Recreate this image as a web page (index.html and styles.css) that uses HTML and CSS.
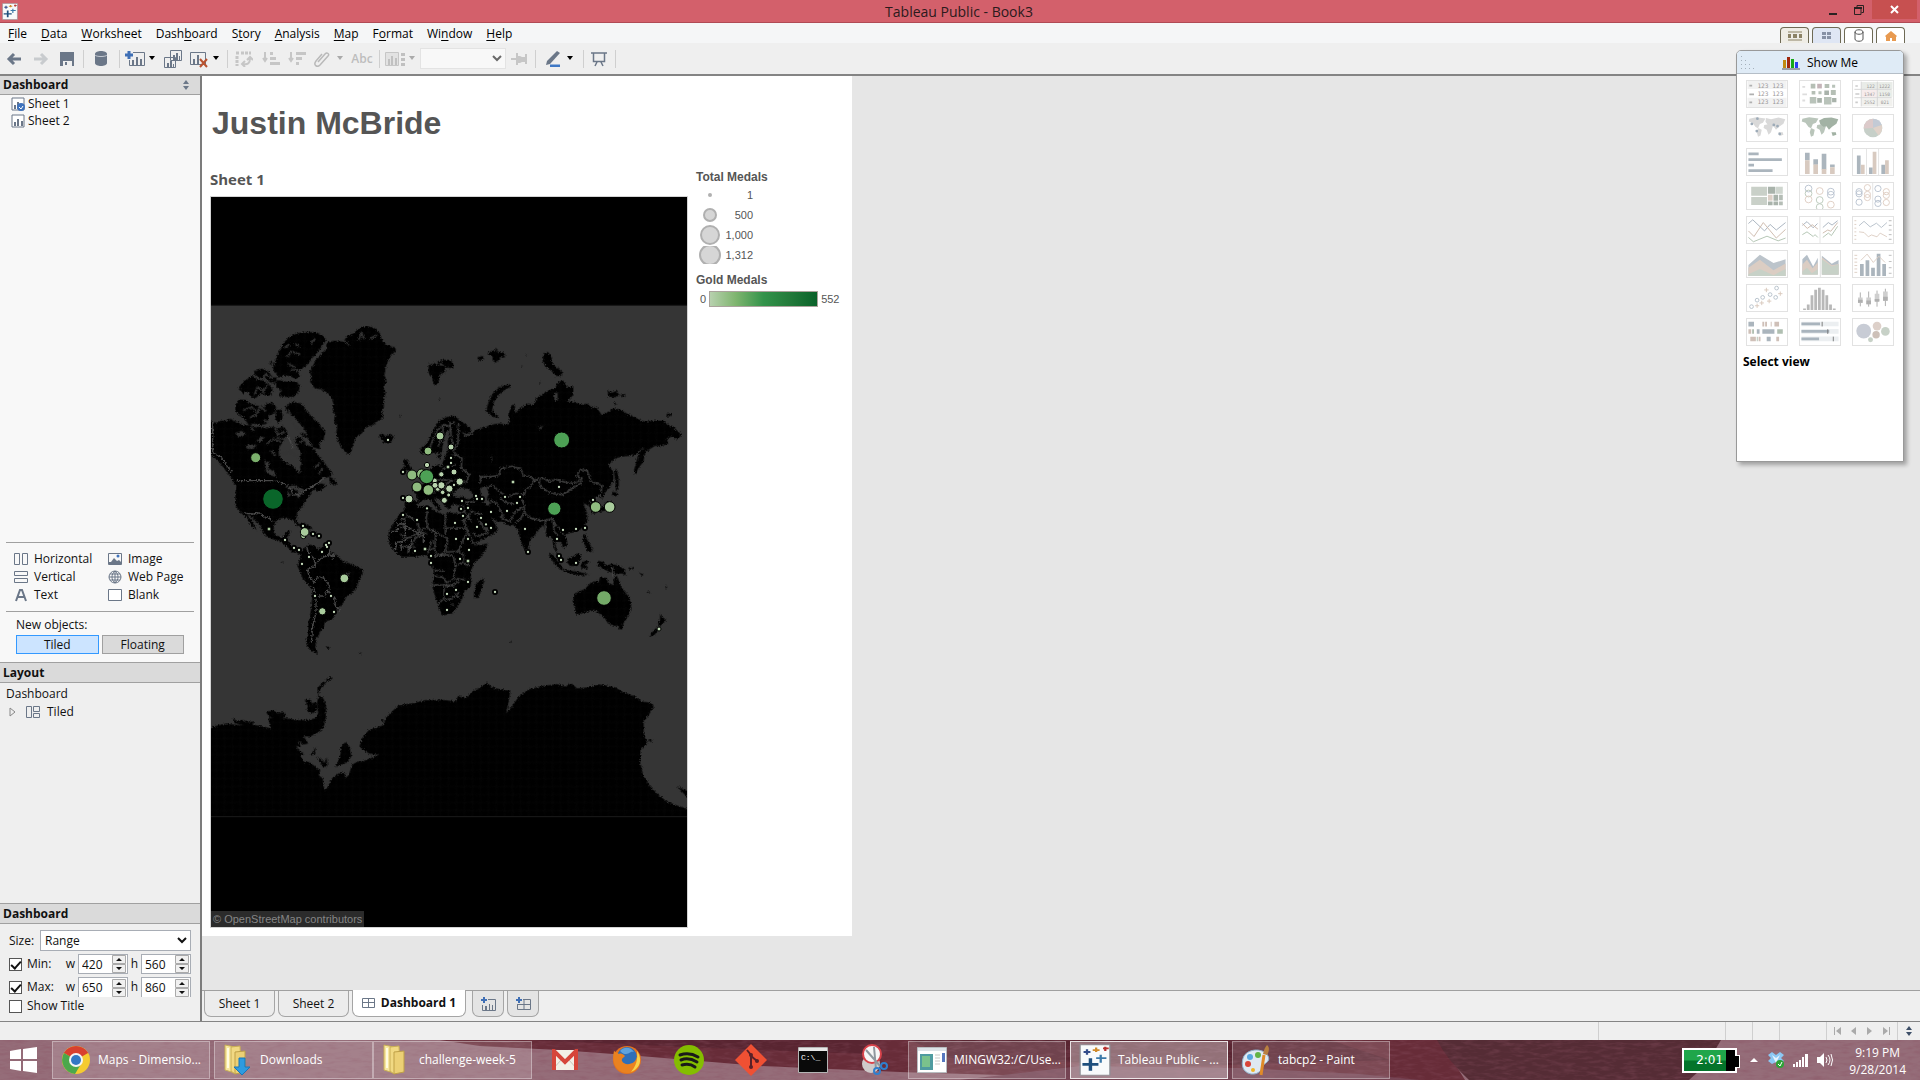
FILE: index.html
```html
<!DOCTYPE html>
<html lang="en">
<head>
<meta charset="utf-8">
<title>Tableau Public - Book3</title>
<link rel="stylesheet" href="styles.css">
</head>
<body>
<svg class="defs" aria-hidden="true">
  <defs>
    <symbol id="caret" viewBox="0 0 8 5"><path d="M1 0h6L4 4z" fill="currentColor"/></symbol>
    <symbol id="bars" viewBox="0 0 14 14"><path d="M1 1h12v12H1z" fill="#fff" stroke="#6b7788"/><path d="M3 8h2v4H3zM6 5h2v7H6zM10 7h2v5h-2z" fill="#6b7788"/></symbol>
    <symbol id="folder" viewBox="0 0 24 32"><path d="M2 1l10 2v26L2 26z" fill="#f7e7a0" stroke="#c9ae55"/><path d="M8 3l9-1 1 20-6 8-4-3z" fill="#f1d983" stroke="#c9ae55"/><path d="M12 8l10-1v21l-10 2z" fill="#ecd075" stroke="#bfa047"/><path d="M5 4v20" stroke="#fffbe0" stroke-width="2"/></symbol>
    <symbol id="plusmark" viewBox="0 0 28 36"><path d="M1 1h26v34H1z" fill="#f8fafb" stroke="#8b9095"/><path d="M10 16v14M3 23h14" stroke="#1f4f7d" stroke-width="3"/><path d="M19 12v9M15 16h9" stroke="#3a78a8" stroke-width="2"/><path d="M7 6v6M4 9h6" stroke="#334c8a" stroke-width="2"/><path d="M15 4v5M12 7h6" stroke="#d08a2a" stroke-width="2"/><path d="M23 3v5M21 5h5" stroke="#b83030" stroke-width="2"/></symbol>
  </defs>
</svg>

<header class="titlebar">
  <svg class="app-icon" viewBox="0 0 28 36" preserveAspectRatio="none"><use href="#plusmark"/></svg>
  <h1>Tableau Public - Book3</h1>
  <div class="window-controls">
    <button aria-label="Minimize"><svg width="12" height="12"><path d="M2 10h8" stroke="#2b2222" stroke-width="2"/></svg></button>
    <button aria-label="Restore"><svg width="12" height="12"><path d="M1.500 4h6.500v6.500H1.500zM4 3.500V1.500h6.500v7H8.500" fill="none" stroke="#2b2222"/><path d="M1 4h8" stroke="#2b2222" stroke-width="2"/></svg></button>
    <button class="close" aria-label="Close"><svg width="12" height="12"><path d="M2 2l7 7M9 2l-7 7" stroke="#fff" stroke-width="2"/></svg></button>
  </div>
</header>

<nav class="menubar">
  <a href="#"><u>F</u>ile</a><a href="#"><u>D</u>ata</a><a href="#"><u>W</u>orksheet</a><a href="#">Dash<u>b</u>oard</a><a href="#">S<u>t</u>ory</a><a href="#"><u>A</u>nalysis</a><a href="#"><u>M</u>ap</a><a href="#">F<u>o</u>rmat</a><a href="#">Wi<u>n</u>dow</a><a href="#"><u>H</u>elp</a>
  <div class="view-tabs">
    <button aria-label="Cards"><svg width="16" height="10"><path d="M1 1h14M1 9h14" stroke="#8b8265"/><path d="M1 3h3v4H1zM6 3h4v4H6zM12 3h3v4h-3z" fill="#8b8265"/></svg></button>
    <button class="on" aria-label="Sheets"><svg width="12" height="10"><path d="M1 1h4v3H1zM6 1h4v3H6zM1 5h4v3H1zM6 5h4v3H6z" fill="#8791a5"/></svg></button>
    <button aria-label="Data"><svg width="12" height="13"><path d="M2 3v7c0 3 8 3 8 0V3M2 3c0-3 8-3 8 0s-8 3-8 0z" fill="#fff" stroke="#555"/></svg></button>
    <button aria-label="Home"><svg width="14" height="12"><path d="M1 6l6-5 6 5-1 1v4H8V8H6v3H2V7z" fill="#e89a50"/></svg></button>
  </div>
</nav>

<div class="toolbar">
  <button class="tool w28" aria-label="Undo"><svg width="16" height="14"><path d="M8 2L3 7l5 5M3 7h12" fill="none" stroke="#6b7788" stroke-width="3"/></svg></button>
  <button class="tool" aria-label="Redo"><svg width="16" height="14"><path d="M8 2l5 5-5 5M13 7H1" fill="none" stroke="#c8cbce" stroke-width="3"/></svg></button>
  <button class="tool" aria-label="Save"><svg width="14" height="14"><path d="M0 0h14v14H0z" fill="#6b7788"/><path d="M3 9h9v5H3z" fill="#efefef"/><path d="M5 10h2v3H5z" fill="#6b7788"/></svg></button>
  <i class="sep"></i>
  <button class="tool w30" aria-label="Connect to data"><svg width="12" height="15"><path d="M0 3c0-4 12-4 12 0v9c0 4-12 4-12 0z" fill="#6b7788"/><path d="M0 4c1 2 11 2 12 0" fill="none" stroke="#c5cad2"/></svg></button>
  <i class="sep"></i>
  <button class="tool-menu" aria-label="New worksheet"><svg width="20" height="16"><path d="M8 1.500h11.500v13H4.500V9" fill="none" stroke="#6b7788"/><path d="M7 9h2v5H7zM11 6h2v8h-2zM15 8h2v6h-2z" fill="#6b7788"/><path d="M4 0v8M0 4h8" stroke="#3f6fb5" stroke-width="3"/></svg><svg class="caret"><use href="#caret"/></svg></button>
  <button class="tool" aria-label="Duplicate"><svg width="18" height="18"><path d="M6.500.5h11v10h-11zM.5 7.500h11v10H.5z" fill="#efefef" stroke="#6b7788"/><path d="M9 5h2v5H9zM12 3h2v7h-2zM15 6h1v4h-1zM3 13h2v4H3zM6 11h2v6H6zM9 14h1v3H9z" fill="#6b7788"/></svg></button>
  <button class="tool-menu" aria-label="Clear"><svg width="20" height="18"><path d="M1.500 2.500h15v12h-15z" fill="none" stroke="#6b7788"/><path d="M4 9h2v5H4zM8 5h2v9H8z" fill="#6b7788"/><path d="M11 9l7 8M18 9l-7 8" stroke="#b9522f" stroke-width="2"/></svg><svg class="caret"><use href="#caret"/></svg></button>
  <i class="sep"></i>
  <button class="tool w28" aria-label="Swap"><svg width="18" height="16" fill="none" stroke="#c6c6c6"><path d="M1 2h3M6 2h10M2 5v10" stroke-width="3" stroke-dasharray="3 1"/><path d="M8 13c5 1 7-1 7-6M12 9l3-3 3 3M10 10l-3 3 3 3" stroke-width="2"/></svg></button>
  <button class="tool" aria-label="Sort ascending"><svg width="18" height="16"><path d="M3 1v9M1 7l2 3 2-3" fill="none" stroke="#c6c6c6" stroke-width="2"/><path d="M8 1h3v3H8zM8 6h6v3H8zM8 11h10v3H8z" fill="#c6c6c6"/></svg></button>
  <button class="tool" aria-label="Sort descending"><svg width="18" height="16"><path d="M3 1v9M1 7l2 3 2-3" fill="none" stroke="#c6c6c6" stroke-width="2"/><path d="M8 1h10v3H8zM8 6h6v3H8zM8 11h3v3H8z" fill="#c6c6c6"/></svg></button>
  <button class="tool-menu off" aria-label="Group"><svg width="18" height="16"><path d="M5 11l7-8c2-2 5 0 3 2l-8 9c-3 3-7 0-4-4l6-7" fill="none" stroke="#b9b9b9" stroke-width="1.500"/></svg><svg class="caret"><use href="#caret"/></svg></button>
  <button class="tool w28 abc">Abc</button>
  <i class="sep"></i>
  <button class="tool-menu off" aria-label="Fit"><svg width="20" height="14"><path d="M.5.500h13v13H.5z" fill="#e2e2e2" stroke="#c6c6c6"/><path d="M3 7h2v6H3zM6 4h2v9H6zM10 6h2v7h-2zM16 1h4v3h-4zM16 6h4v3h-4zM16 11h4v3h-4z" fill="#c0c0c0"/></svg><svg class="caret"><use href="#caret"/></svg></button>
  <select class="fit" aria-label="Fit" disabled><option></option></select>
  <button class="tool" aria-label="Pin"><svg width="16" height="12"><path d="M0 6h6M6 0v12M15 1v10" stroke="#c6c6c6" stroke-width="2"/><path d="M6 3h3l2 1h4v5h-4L9 10H6z" fill="#c6c6c6"/></svg></button>
  <i class="sep"></i>
  <button class="tool-menu w42" aria-label="Highlight"><svg width="18" height="16"><path d="M2 14l1-4L13 0l3 2L6 13z" fill="#6b7788"/><path d="M6 15h10" stroke="#3f78c5" stroke-width="3"/></svg><svg class="caret"><use href="#caret"/></svg></button>
  <i class="sep"></i>
  <button class="tool" aria-label="Presentation mode"><svg width="16" height="16"><path d="M0 2h16M2.500 2v8.500h11V2M6 11l-2 4M10 11l2 4" fill="none" stroke="#6b7788" stroke-width="1.500"/></svg></button>
  <i class="sep"></i>
</div>

<main class="main">
  <aside class="sidebar">
    <h2 class="panel-head first">Dashboard <svg width="8" height="10"><path d="M1 4l3-4 3 4zM1 6l3 4 3-4z" fill="#6b7788"/></svg></h2>
    <ul class="sheets">
      <li><svg width="14" height="14"><use href="#bars"/><circle cx="10" cy="10" r="4" fill="#3f73bd"/><path d="M8 10l2 2 2-3" fill="none" stroke="#fff"/></svg>Sheet 1</li>
      <li><svg width="14" height="14"><use href="#bars"/></svg>Sheet 2</li>
    </ul>
    <div class="objects">
      <ul>
        <li><svg width="14" height="14"><path d="M.5 1.500h5v11h-5zM8.500 1.500h5v11h-5z" fill="none" stroke="#6b7788"/></svg>Horizontal</li>
        <li><svg width="14" height="14"><path d="M.5 1.500h13v11H.5z" fill="none" stroke="#6b7788"/><path d="M3 10l3-4 3 3 2-1 2 2v2H1v-2z" fill="#6b7788"/><circle cx="10" cy="4" r="1.500" fill="#3f73bd"/></svg>Image</li>
        <li><svg width="14" height="14"><path d="M.5 1.500h13v4H.5zM.5 8.500h13v4H.5z" fill="none" stroke="#6b7788"/></svg>Vertical</li>
        <li><svg width="14" height="14"><path d="M7 1a6 6 0 100 12A6 6 0 007 1zM7 1v12M1 7h12M2 4h10M2 10h10M7 1C3 4 3 10 7 13M7 1c4 3 4 9 0 12" fill="none" stroke="#6b7788"/></svg>Web Page</li>
        <li><svg width="14" height="14"><path d="M2 13L6 2h2l4 11M4 9h6" fill="none" stroke="#6b7788" stroke-width="2"/></svg>Text</li>
        <li><svg width="14" height="14"><path d="M.5 1.500h13v11H.5z" fill="#fff" stroke="#6b7788"/></svg>Blank</li>
      </ul>
    </div>
    <div class="new-objects">
      <span>New objects:</span>
      <div><button class="on">Tiled</button><button>Floating</button></div>
    </div>
    <h2 class="panel-head">Layout</h2>
    <div class="layout-tree">
      <div>Dashboard</div>
      <div class="node"><svg width="8" height="10"><path d="M1 1l5 4-5 4z" fill="none" stroke="#888"/></svg><svg width="14" height="13"><path d="M.5.500h5v11h-5zM7.500.500h6v5h-6zM7.500 7.500h6v4h-6z" fill="none" stroke="#6b7788"/></svg>Tiled</div>
    </div>
    <h2 class="panel-head">Dashboard</h2>
    <form class="size">
      <div class="row size-row"><label for="size">Size:</label><select id="size"><option>Range</option></select></div>
      <div class="row dims">
        <label><input type="checkbox" checked>Min:</label>
        <label for="minw">w</label><span class="spin"><input id="minw" value="420"><svg width="14" height="18"><use href="#steps"/></svg></span>
        <label for="minh">h</label><span class="spin"><input id="minh" value="560"><svg width="14" height="18"><use href="#steps"/></svg></span>
      </div>
      <div class="row dims">
        <label><input type="checkbox" checked>Max:</label>
        <label for="maxw">w</label><span class="spin cut"><input id="maxw" value="650"><svg width="14" height="18"><use href="#steps"/></svg></span>
        <label for="maxh">h</label><span class="spin cut"><input id="maxh" value="860"><svg width="14" height="18"><use href="#steps"/></svg></span>
      </div>
      <label class="row"><input type="checkbox">Show Title</label>
    </form>
    <svg class="defs"><symbol id="steps" viewBox="0 0 14 18"><path d="M.5.500h13v8H.5zM.5 9.500h13v8H.5z" fill="#f0f0f0" stroke="#aaa"/><path d="M4 6h6L7 3zM4 12h6l-3 3z" fill="#111"/></symbol></svg>
  </aside>

  <section class="workspace">
    <div class="canvas">
      <article class="page">
        <h2 class="page-title">Justin McBride</h2>
        <div class="page-body">
          <section class="sheet">
            <h3>Sheet 1</h3>
            <div class="map">
              <svg viewBox="0 0 1428 2190" preserveAspectRatio="xMidYMid slice" role="img" aria-label="World map of medals">
                <defs>
                  <filter id="coast" x="-5%" y="-5%" width="110%" height="110%" color-interpolation-filters="sRGB"><feTurbulence type="fractalNoise" baseFrequency="0.200" numOctaves="2" seed="4"/><feDisplacementMap in="SourceGraphic" scale="12" xChannelSelector="R" yChannelSelector="G"/></filter>
                  <pattern id="tile" width="24" height="24" patternUnits="userSpaceOnUse"><path d="M0 0h24v24H0z" fill="#000"/><path d="M0 1h24M1 0v24" stroke="#090909" stroke-width="2"/></pattern>
                </defs>
                <path d="M0 0h1428v2190H0z" fill="#000"/>
                <path d="M0 326h1428v1533H0z" fill="#353535"/>
                <g filter="url(#coast)" fill="url(#tile)">
                  <g transform="translate(-33 309)">
                    <path d="M20 362l30 6 12-6 14 1 16-7 8 6 12 4 18 10 20-1 15 7 15-2 20 5 15-5 20 5 15-7 8 12 4 10-7 15-10 15-9 15v20l9 15 17 10 18 10 10 10 7 12 5-7-2-15 5-10-5-15 3-15-8-15-5-10 15-5 15 5 15 5 10 10 7 15 13 13 10 12 10 15 13 15-8 10-20 5-15 10-10 10 10-3 10-2 15 6-15 14-15 5-5-10-10 10-10 15-10 15-5 10-12 15-8 15v15l7 16-7 2-10-18-15-4-15-2-12 2-13 10-3 15-2 13 8 12 12 5 12-5 8-12 10-3-2 13-10 10 7 10 10 12 3 10 12 8 15 0 5 4-8 6-12-6-12 0-13-14-15-13-15-10-15-3-15-7-15-10-5-15-10-15-15-15-10-10-8-2 16 22 12 24-10-5-12-16-9-18-10-7-15-15-7-15-1-20 1-20 2-17-8-8-7-15-15-20-15-20-15-17-30-20z"/>
                    <path d="M440 460l-15-15-10-20-7-25 4-20-10-18 3-17-7-15 2-20-5-15-10-15-20-12-20-3-15-20 5-15-7-15 12-20 10-20 15-15 15-15-2-15 22-8 30 3 10-15 20-10 20-18 20-5 25 8 15 15 5 18 15 17 25 7 3 10-13 13-10 15-7 20-5 25 7 20-10 15 7 20-7 20 2 20-7 15 5 15-15 12-15 13-20 5-15 20-15 10-10 20-5 20-5 12z"/>
                    <path d="M315 200l-15 10-20-5-18 10-17-10-17-15 0-20 12-20 10-20 15-18 25-12 30-4 30 1 20 11 8 12-13 20-15 20-15 15-10 15z"/>
                    <path d="M225 185l22 14 26 12 20 2 6 14-10 10-18-8-20-4-14 8-12-12-6-16zM230 240l30 5 30 0 10 14-6 20-14 12-28 0-18-4 10-16-16-10zM162 214l24-8 20 8 8 14 16 6-4 18-18-6-10-12-20-2-14-8zM116 262l20-22 22-12 14 10 20 4 12 12 8 18-14 10-18 0-12 12-16-4-8-14-16 4zM188 260l16-10 16 20-6 18-20-2zM106 320l10-22 20 2 14 10 16 6 24 4 16 15-1 20-5 16-20 4-20-4-14 4-16-24-15-6-9-14zM194 316l20-10 14 14-4 20-18 6-10-12zM228 330l16 0 4 24-14 16-8-16zM258 316l22-10 22 4 20 26 20 20 20 20 14 20-6 24-14 10 5 18-20-6-20-26-22-16 20-4-20-26-16-20-18-8-8-14zM290 410l20 6 8 16-20 6-14-14zM210 184l6 2v8l-6-2zM352 500l14 5 2 10-12 0zM388 530l12 6 12 16-10 4-14-10zM535 408l10-6 14 6 14-6 8 8-4 12-14 8-16-4 0-8zM686 190l8 6 8-8 10 8 10-8 14 12 8 4 16 0 0-16-12-8-22 0-14 8 8 8 16 2-2 20-14 4-4 24-10 12-6-8-4-20-10-12zM605 505l12-4 2 16-14 6zM612 476l10 4 6 16 10 20-2 14-14 4 6-16-12-16-6-14z"/>
                    <path d="M292 672l18-2 16 8 12 8-14 2-16-6-12-4zM330 696l16 0 8 8-12 4-14-4zM368 756l-6-10 24 0-4 14zM245 784l6 2-4 3zM380 1040l9 1-2 6-8-2zM476 1056l8 5-4 2zM598 344l5 2-3 4zM716 295l5 2-3 4z"/>
                    <path d="M308 750l10-12 12-5 15 7 10 8 15-8 15 10 15 10 15 10 15 15 25 7 15 8 18 8v14l-13 23-7 20-13 15-15 8-8 17-12 15-12 15-13 5 10 10-13 10-17 5-5 20-10 10-5 15-10 5 5 15-5 10 10 22-17-7-13-10-7-20 7-25v-30l7-35 4-35 2-30-13-15-17-20-10-25-6-12 8-23z"/>
                  </g>
                  <g transform="translate(567 369)">
                    <path d="M62 400l0-15 16-13 12-17 10-25 15-25 15-10 20-7 20 2 5 10 20 12 17 13-2 15-15 0-10-5 10 15 20-5 10-15 20-5 20-7 20-6 15-2 20 5 10-10-5-20 10-30 10 0 0 25 15-15 25-15 15 5 10-20 20-15 15-8 20-7 10-20 15-3 10 18 20 0 0 25-20 20 20 0 25 10 15-5 15 12 15 0 15 23 20-10 15-10 20 3 20 12 25 12 15 8 15 5 25-3 30 0 20 16 15 7 20 20-13 13-17-8-15 5 5 17-20 6-20 0-20 12-10 10-5 25-15 20-10 20-3-15 6-20 7-30 20-20-15 10-15 15-15 3-25 2-20 5-20 20 15 20 0 25-10 20-15 15-7 20-18-5-15 5-10 10 16 10 8 24-10 2-14-26-15-5 10 25 3 25-8 15-15 15-20 7-15 3-10 5 5 15 3 13-13 12-5-15-12-10-8 5 5 30 10 15 10 10-10-3-13-22-7-20-5-25-15 0-5-20-5-15-15 15-10 15-15 15-5 25-10 8-10-23-8-25-2-15-15-15-20 0-15-10-15 0-18-16 23 41-20 15-30 15-18 6 5 10 30-6-5 20-15 20-20 20-10 25 0 30 0 15-20 15-5 20-15 25-15 20-30 7-10-22-10-30-10-35 5-35-5-25-10-25-10-10-30 5-25 0-20 0-12-10-14-15-10-20 0-30 18-30 14-22 14-10 20-10 30-4 28 2 14 12 24 10 20-6 30 4 18-2-4-22-14 0-18-6-8 12-6 6-10-10-8-14-20-12-6 4 16 20 6 14-8 2-12-16-16-20-22 4-14 10 0 16-10 12-22 0-6-6 0-26 16-8 22 6-2-20-14-14 18-8 24-14 12-14 0-24 8-14 14 0 6-14-6-14 10-10-12 0z"/>
                    <path d="M430 100l14-4 12 16-2 14 12 14 20 14 0 14-20 0-12-16-16-12-10-16zM328 192l4 8-22 12-16 14-12 20-6 26 22 22-16-2-24-18 8-30 14-26 18-16zM232 112l16-4 4 8-16 6zM262 100l14-8 8 4 4-14 6 14 18 2 4 10-14 4-14 16-10-6 0-12zM622 212l14 6 14-6 8 14-14 6-18-2zM660 224l18 2-6 8zM640 246l10 4-6 6zM800 282l14-2-2 8-12 2zM376 102l4 1-2 4zM364 136l4 2-3 3zM418 186l4 2-3 4z"/>
                    <path d="M650 445l6 30 0 30-8 10-2-30-4-30zM636 515l18 4-4 10-14-2zM620 545l14 0-4 14-14 12-24 6-4-8 20-8zM552 620l6-4-2 18-6-4zM550 645l8-4 2 16 12 20 6 14-8 6-10-4-2-12-10-16zM445 698l12 4 12 16 14 18 6 12-10 0-16-18-12-16zM488 748l22 4 26 4 20 4 14 4-30 2-30-6-20-6zM502 716l12-4 20-12 10 8-8 20-6 10-20 0-8-10zM548 724l20-2-2 8-10 2 8 12-6 4-8-8-4 12-4-14zM594 722l16 4 8 12 16-6 24 6 16 12 6 18-14-8-20 2-20-8-18-8-14-8zM686 742l14 0-2 6-12 0zM716 756l14 8-4 4zM742 812l8 6-4 4zM796 798l6 2-4 6z"/>
                    <path d="M524 820l14-6 18-8 14-16 16-6 10 0 4-12 20 2 4 14 14 8 6-24 6-6 8 22 10 20 18 22 8 22-4 22-12 24-12 18-22 2-20-8-10-16-12-10-16-12-20 2-26 8-12 2-4-20-6-20zM654 912l16 0-4 16-8 0zM780 882l8 10 10 6-8 12-12 10-4-8 6-12zM770 922l6 6-12 16-14 6 2-8z"/>
                    <path d="M248 776l4 10-8 22-8 26-14 0 0-20 6-22zM330 964l6 2-4 3z"/>
                  </g>
                  <g transform="translate(-33 1359)">
                    <path d="M20 245l20-15 40-10 30 5 40-3 40 8 22 5-7-30 25-5 30 5 30 5 30 0 25-5 10-15-5-25 5-25-3-25 13-15 25-18 10 3-20 10-18 20-7 20 15 10 8 20 0 35-8 35-20 15-20 10-20-2 15 22-14 4-16-12 8 18-14-2 6 12 16 10-10 8 13 20 12-3 20 15 15 10-5 15 12 10 3 25 5 12 10-17 10-20 20-15 18-2 2 17 10-10 10-30 15-10 15 0 50-20-30-5-28-20 8-25 20-25 45-15 5-20 20-20 20-20 40-5 40-10 60 0 30 5 10-20 20 10 20-20 30-15 15-12 15 14 25 6 30 4-5 33-8 35 18-20 20-30 30-22 40-10 45-6 25 8 18-10 17 15 35-3 30-9 50 9 20 13 40 15 20 15 25 3 10 12-15 25-15 20 0 35 10 30-20 20 0 40 10 40 20 30 25 25 25 20 35 13 60 20v60H-20V245z"/>
                    <path d="M422 290l14-13 12 12 6 30-12 18-36 14 10-20 6-22zM332 312l18-22-10 26zM350 318l24 20 6-16 2 28-14 0zM98 202l10 10 20-2 20 6 16-2-10 12-30-2-20-4zM198 186l22-6 12 10 20-4 6 14-30 6-20-6zM314 152l16-6 6 14 12-4 2 26-16 8-14-8 4-14zM1430 408l51 24v30zM1344 268l14 2-6 6zM545 208l6 0-2 10z"/>
                  </g>
                  <g fill="#353535">
                    <path d="M72 708l20-6 14 8-14 10-14-4zM104 744l34-2-10 14-20 0zM136 732l14-14 10 4-12 14zM160 790l16 6-6 18 14 12-4 10-14-10zM174 816l16 8 6 16-14-4zM221 869l28-4 26 10 6 14-14 2-12-12-18-2zM230 878l10 16-10 8zM252 886l18 10-8 8zM390 1133l30-6-14 14z"/>
                    <path d="M678 800l10-18 8-42 6-32 16-14-8 40 2 22-12 28-10 28zM715 776l24-8-8 10zM734 880l14-10 10 4 14 2 18 22-16 10-22-8-22 2-6-12zM806 874l18-8 10 22-6 16 14 18-14 4-14-18zM1030 612h10l0-24-10 0zM980 692l18-6-12 12zM844 774v20l-4-4zM758 954l8 30 16 40 12 20-10-2-16-34-16-44zM798 960l22 22 22 18-20 2-14-18z"/>
                  </g>
                  <g class="channels">
                    <path d="M96 640l26-10 14 12M116 662l20-8 10-24 20 12M130 594l10-24 18 14 12-22M150 550l14-18 20 12 12-16M176 600l12-22 24 4M158 668l16 10 14-20M192 690l8 24 20-10M168 740l18-14 24 8M180 760l14 16M232 640l10 24 14 6M246 680l12 16 20-6M270 700l16 14M214 772l24-6 18 12M266 736l24-14M228 480l14-16 26 8M220 452l16-10M250 440l16 8M300 440l12-16M230 500l22 10M398 430l16 14M442 430l10-22 8 18M478 424l20-10M120 690l10 14M196 722l30 6M150 610l20 8M310 812l16-12M322 830l14-16"/>
                  </g>
                </g>
                <path d="M0 1859h1428v331H0z" fill="#000"/>
                <path d="M0 325h1428M0 1859h1428" stroke="#1b1b1b" stroke-width="3"/>
                <g class="borders" filter="url(#coast)">
                  <g transform="translate(-33 309)">
                    <path d="M108 542h120l28 12 16 12 6 20 20-4 20-12 16-8 20-14 20-16M136 640l26 2 18-4 14 16 10-4 14 16M240 710l16 4 4 12M38 362v96l26 14 16 24 16 20M262 405l18 40M320 740l6 20 16 16 4 22-24 10 6 24 16 12M342 798l18-20 26-14 20 6M340 850l14-20 18 4 16 24-4 20 20 14 2 26 14 14M340 860l8 28 0 50-10 40-4 50M348 888l24 0 12-18 14 22M388 750l2 20M400 760l0 16"/>
                    <path d="M568 694h24v-22h24v50l-30 6M600 668l56 32 14-2 0 30M616 640l-14 22M590 730l-4 20M604 728v24M636 720l-10 36"/>
                  </g>
                  <g transform="translate(567 369)">
                    <path d="M88 390l10-30 14-30 20-16 16 4 16-14M130 316l-2 30-14 34M150 305l4 50 6 20M176 310l-2 60-16 24M160 400l26 14-2 30 24 20-10 24-26-10-30 10-14 26-30-10-20 4M124 450l20-12 24-4M110 480l44 0M88 480l14 40M128 500l30 14M240 490l2-20 30 0 24-4 6-20 34-8 28 10 6 20 20 0 16 16M402 480l-10 20-14 6-6 20-24-6-24 10-26-14-20-22-18 10M402 480l24-6 24 10 16-6 34 10 20 2 20-8M416 484l10 20 26 16 36 4 24-16 30-18 4-16-18-4 14-22 20 4 10 32 34 12-4 30-16 10M360 528l10 20 6 34 20 14 36 6 24-6 14 22M300 532l18 16 30 4M270 540l20 10 20 40M300 590l30 16 14-30 24-14M348 608l14-12 10-20M436 600l0 36M460 600l2 34 14 14M476 620l14 24M200 550l14 24 30 10M190 570l24 34M192 600l20-20M230 650l-12-12M230 650l36-14M180 546l50 0 0-20M222 530l30 14"/>
                    <path d="M14 582l0 40-14 0M14 580l40 26 4 30-34 20-24-14M54 640l20-16M84 566l-6 30 6 30 24 8M84 626l60 30M136 580v64M136 624h60M108 634l-4 50-22 10M144 656l-8 40-24 12-6-20M136 696l40-2 14 10 0 18M176 694l12-34 12-20M80 640l-34 14-12 26-34 0M24 700l2-24M40 700l2-22M84 700l12-40M100 710l36-6 24 4 6 30-6 40-20 10-12-16-28-4M96 750l36 4M164 740l24-14 20 12M166 776l36 4M90 795h64l22-10M132 800v34l-18 20M136 800l20-4 20 24-24 16-20 4M164 820l14 12M156 850l4 10M638 740v30"/>
                  </g>
                </g>
                <g class="dots">
                  <g transform="translate(567 369)">
                    <path class="dot" d="M9 456h0M9 534h0M9 585h0M51 600h0M81 565h0M45 693h0M93 708h0M93 729h0M153 414h0M153 429h0M165 609h0M168 657h0M204 657h0M207 690h0M180 717h0M204 786h0M168 810h0M141 822h0M141 870h0M285 816h0M183 567h0M204 564h0M189 588h0M186 543h0M228 528h0M231 537h0M246 537h0M243 594h0M273 576h0M231 621h0M258 613h0M273 624h0M315 531h0M321 573h0M351 549h0M360 531h0M375 627h0M384 696h0M477 501h0M489 630h0M471 657h0M528 627h0M555 624h0M477 708h0M483 720h0M528 729h0M579 540h0M162 495h0"/>
                    <path class="core" d="M9 456h0M9 534h0M9 585h0M51 600h0M81 565h0M45 693h0M93 708h0M93 729h0M153 414h0M153 429h0M165 609h0M168 657h0M204 657h0M207 690h0M180 717h0M204 786h0M168 810h0M141 822h0M141 870h0M285 816h0M183 567h0M204 564h0M189 588h0M186 543h0M228 528h0M231 537h0M246 537h0M243 594h0M273 576h0M231 621h0M258 613h0M273 624h0M315 531h0M321 573h0M351 549h0M360 531h0M375 627h0M384 696h0M477 501h0M489 630h0M471 657h0M528 627h0M555 624h0M477 708h0M483 720h0M528 729h0M579 540h0M162 495h0"/>
                    <g fill="#b9d4ae"><circle cx="75" cy="687" r="6"/><circle cx="204" cy="723" r="6"/><circle cx="339" cy="486" r="6"/><circle cx="777" cy="927" r="6"/><circle cx="144" cy="441" r="6"/><circle cx="153" cy="381" r="9"/><circle cx="81" cy="435" r="8"/><circle cx="124" cy="463" r="8"/><circle cx="162" cy="456" r="9"/><circle cx="179" cy="485" r="11"/><circle cx="146" cy="525" r="6"/><circle cx="128" cy="517" r="7"/><circle cx="133" cy="541" r="9"/><circle cx="148" cy="506" r="11"/><circle cx="113" cy="506" r="8"/><circle cx="124" cy="496" r="11"/><circle cx="104" cy="482" r="8"/><circle cx="105" cy="496" r="9"/><circle cx="27" cy="537" r="12"/></g>
                    <g fill="#a9cc9c"><circle cx="120" cy="348" r="12"/><circle cx="629" cy="561" r="16"/></g>
                    <g fill="#8fbc7f"><circle cx="84" cy="393" r="12"/><circle cx="36" cy="465" r="15"/><circle cx="65" cy="462" r="15"/><circle cx="51" cy="501" r="15"/><circle cx="85" cy="510" r="16"/><circle cx="587" cy="561" r="16"/></g>
                    <g fill="#4da155"><circle cx="80" cy="470" r="21"/><circle cx="485" cy="360" r="24"/><circle cx="463" cy="566" r="20"/></g>
                    <circle cx="612" cy="834" r="22" fill="#74aa68"/>
                  </g>
                  <g transform="translate(-33 309)">
                    <path class="dot" d="M255 720h0M282 744h0M297 750h0M309 678h0M339 702h0M357 708h0M378 735h0M387 729h0M381 741h0M366 756h0M327 771h0M306 792h0M345 888h0M393 888h0M402 936h0M564 420h0"/>
                    <path class="core" d="M255 720h0M282 744h0M297 750h0M309 678h0M339 702h0M357 708h0M378 735h0M387 729h0M381 741h0M366 756h0M327 771h0M306 792h0M345 888h0M393 888h0M402 936h0M564 420h0"/>
                    <g fill="#a9cc9c"><circle cx="310" cy="708" r="8"/><circle cx="314" cy="696" r="13"/><circle cx="207" cy="687" r="6"/><circle cx="433" cy="835" r="13"/><circle cx="367" cy="934" r="11"/></g>
                    <circle cx="167" cy="473" r="15" fill="#7bb06c"/><circle cx="219" cy="597" r="31" fill="#0a662a"/>
                  </g>
                </g>
              </svg>
              <span class="credit">© OpenStreetMap contributors</span>
            </div>
          </section>
          <aside class="legends">
            <h4>Total Medals</h4>
            <ul class="sizes">
              <li><svg width="24" height="20"><circle class="speck" cx="12" cy="10" r="2"/></svg><span>1</span></li>
              <li><svg width="24" height="20"><circle cx="12" cy="10" r="6"/></svg><span>500</span></li>
              <li><svg width="24" height="20"><circle cx="12" cy="10" r="9"/></svg><span>1,000</span></li>
              <li><svg width="24" height="18"><circle cx="12" cy="9" r="10"/></svg><span>1,312</span></li>
            </ul>
            <h4>Gold Medals</h4>
            <div class="ramp"><span>0</span><i></i><span>552</span></div>
          </aside>
        </div>
      </article>
    </div>
    <nav class="sheet-tabs">
      <button>Sheet 1</button>
      <button>Sheet 2</button>
      <button class="on"><svg width="13" height="10"><path d="M.5.500h12v9H.5zM.5 4.500h12M6.500.500v9" fill="none" stroke="#6b7788"/></svg>Dashboard 1</button>
      <button class="add" aria-label="New worksheet"><svg width="15" height="14"><path d="M7 2.500h7.500v11H1.500V8" fill="none" stroke="#6b7788"/><path d="M4 9h2v4H4zM8 7h1v6H8zM11 8h1v5h-1z" fill="#6b7788"/><path d="M3 0v6M0 3h6" stroke="#3f6fb5" stroke-width="2"/></svg></button>
      <button class="add" aria-label="New dashboard"><svg width="15" height="14"><path d="M7 2.500h7.500v10H1.500V7M1 7.500h13M8 3v9" fill="none" stroke="#6b7788"/><path d="M3 0v6M0 3h6" stroke="#3f6fb5" stroke-width="2"/></svg></button>
    </nav>
  </section>
</main>

<footer class="statusbar">
  <i class="c127"></i><i class="c27"></i><i class="c27"></i><i class="c47"></i>
  <div class="pager"><svg width="58" height="10" fill="#aaa"><path d="M1 1h1v8H1zM8 1v8L3 5zM23 1v8l-5-4zM34 1v8l5-4zM50 1v8l5-4zM56 1h1v8h-1z"/></svg></div>
  <div class="more"><svg width="8" height="10"><path d="M1 4l3-4 3 4zM1 6l3 4 3-4z" fill="#3d4f68"/></svg></div>
</footer>

<footer class="taskbar">
  <svg class="wallpaper" viewBox="0 0 1920 40" preserveAspectRatio="none" aria-hidden="true">
    <defs><filter id="grain" x="0" y="0" width="100%" height="100%"><feTurbulence type="fractalNoise" baseFrequency="0.080 0.300" numOctaves="3" seed="8"/><feColorMatrix values="0 0 0 0 0.250 0 0 0 0 0.080 0 0 0 0 0.120 1.800 0 0 0 -0.750"/></filter></defs>
    <path d="M0 0h1920v40H0z" fill="#956d79"/>
    <path d="M440 0h1000l25 40H1350L1100 38 900 32 760 26 640 16 560 10 480 6z" fill="#672c38"/>
    <path d="M530 0h340v14l-160-6zM910 0h420l60 20-200 6-240-8z" fill="#592531"/>
    <path d="M1080 26l160 2 120 6 60 6H960z" fill="#744453"/>
    <path d="M1437 0h284q-14 26-32 40h-220q-22-20-32-40z" fill="#552c35"/>
    <path d="M0 0h1437l25 40H0zM1721 0h199v40h-231z" filter="url(#grain)" opacity=".45"/>
  </svg>
  <button class="start" aria-label="Start"><svg width="28" height="26"><path d="M0 4l11-2v10H0zM13 2l14-2v12H13zM0 14h11v10L0 22zM13 14h14v12l-14-2z" fill="#fff"/></svg></button>
  <button class="task"><svg width="30" height="30" viewBox="0 0 30 30"><circle cx="15" cy="15" r="14" fill="#f5cb30"/><path d="M15 15L3 8a14 14 0 0124 0z" fill="#d8402f"/><path d="M15 15L3 8a14 14 0 0011 21l6-10z" fill="#4ba84c"/><path d="M3 8A14 14 0 0127 8H15z" fill="#d8402f"/><circle cx="15" cy="15" r="7" fill="#f4f4f4"/><circle cx="15" cy="15" r="5" fill="#3277c4"/></svg><span>Maps - Dimensio...</span></button>
  <button class="task joined"><svg width="30" height="32" viewBox="0 0 30 32"><use href="#folder" width="24" height="32"/><path d="M16 14h6v9h5l-8 8-8-8h5z" fill="#2e9be0" stroke="#1976b8"/></svg><span>Downloads</span></button>
  <button class="task joined"><svg width="30" height="32" viewBox="0 0 30 32"><use href="#folder" width="24" height="32"/></svg><span>challenge-week-5</span></button>
  <div class="pins">
  <button class="pin" aria-label="Gmail"><svg width="28" height="22"><path d="M1 1h26v20H1z" fill="#f2efe6"/><path d="M1 21L11 10M27 21L17 10" stroke="#c8c4b8"/><path d="M3 21V2l11 11L25 2v19" fill="none" stroke="#d6453a" stroke-width="4"/></svg></button>
  <button class="pin" aria-label="Firefox"><svg width="30" height="30"><circle cx="15" cy="15" r="14" fill="#e3731e"/><circle cx="15" cy="12" r="10" fill="#2f6fb8"/><path d="M8 6c4-5 11-4 14 1-4-1-4 2-8 2s-4-2-6-3z" fill="#5fa3dd"/><path d="M2 6l5 3c2-1 4 0 6 2-1 2-4 2-3 5 2 4 8 4 12 1 2-2 4-6 3-11 6 9 3 20-8 22C5 29-1 18 2 6z" fill="#ea8220"/><path d="M25 6c6 8 3 18-6 21 5-6 7-12 6-21z" fill="#f8d14a"/></svg></button>
  <button class="pin" aria-label="Spotify"><svg width="30" height="30"><circle cx="15" cy="15" r="15" fill="#84bd00"/><path d="M6 10c6-2 13-1 18 2M7 15c5-2 11-1 16 2M8 20c4-1 9-1 13 2" fill="none" stroke="#1a1a1a" stroke-width="3" stroke-linecap="round"/></svg></button>
  <button class="pin" aria-label="Git"><svg width="32" height="32"><path d="M16 0l16 16-16 16L0 16z" fill="#f05033"/><path d="M12 6l4 5v13M16 12l6 5" fill="none" stroke="#5a2128" stroke-width="2"/><circle cx="16" cy="11" r="2" fill="#5a2128"/><circle cx="16" cy="23" r="2" fill="#5a2128"/><circle cx="22" cy="17" r="2" fill="#5a2128"/></svg></button>
  <button class="pin" aria-label="Command Prompt"><svg width="30" height="26"><path d="M.5.500h29v25H.5z" fill="#0a0a0a" stroke="#b5b5b5"/><path d="M1 1h28v3H1z" fill="#e8e8e8"/><text x="3" y="13" class="prompt">C:\_</text></svg></button>
  <button class="pin" aria-label="Snipping Tool"><svg width="30" height="32"><circle cx="11" cy="20" r="9" fill="#cfcaca"/><circle cx="12" cy="10" r="9" fill="#f6f6f6" stroke="#d8434b" stroke-width="2"/><path d="M6 6l15 17M14 3l2 22" stroke="#8f979e" stroke-width="2"/><circle cx="24" cy="22" r="3" fill="none" stroke="#2f7fce" stroke-width="2"/><circle cx="17" cy="27" r="3" fill="none" stroke="#2f7fce" stroke-width="2"/></svg></button>
  </div>
  <button class="task"><svg width="30" height="26"><path d="M.5.500h29v25H.5z" fill="#fff" stroke="#b8bcc0"/><path d="M1 1h28v3H1z" fill="#dde3e8"/><path d="M3 7h13v16H3z" fill="#4f9ba0"/><path d="M5 9h8v11H5z" fill="#7ac28c"/><path d="M18 8h5M18 11h5M18 14h5M18 17h5" stroke="#c8c8c8"/><path d="M25 6h3v9h-3z" fill="#5678c0"/></svg><span>MINGW32:/C/Use...</span></button>
  <button class="task on"><svg width="32" height="32" viewBox="0 0 28 36" preserveAspectRatio="none"><use href="#plusmark"/></svg><span>Tableau Public - ...</span></button>
  <button class="task"><svg width="30" height="32"><path d="M3 12c5-8 20-8 24 0 3 6-4 7-5 10s-4 9-12 8C0 28 0 18 3 12z" fill="#dfe9f2" stroke="#8fb1cc"/><circle cx="9" cy="13" r="3" fill="#57a6e0"/><circle cx="17" cy="11" r="3" fill="#62b345"/><circle cx="7" cy="20" r="3" fill="#d84438"/><circle cx="12" cy="26" r="2" fill="#f0b428"/><path d="M26 1c3 2 2 7 0 10l-4-1c1-4 2-7 4-9z" fill="#b98040"/><path d="M23 11l-3 20" stroke="#e08a28" stroke-width="3"/></svg><span>tabcp2 - Paint</span></button>
  <div class="tray">
    <div class="battery"><span>2:01</span></div>
    <svg width="10" height="6"><path d="M1 5h8L5 1z" fill="#fff"/></svg>
    <svg width="18" height="18"><path d="M5 1l4 3 4-3 4 3-3 3 3 3-4 3-4-2-4 2-4-3 3-3-3-3z" fill="#8cc8f4"/><path d="M5 4l4 3 4-3-4 8z" fill="#e8f4fd"/><circle cx="13" cy="13" r="4" fill="#2da336"/><path d="M11 13l2 2 2-4" fill="none" stroke="#fff"/></svg>
    <svg width="16" height="14"><path d="M0 11h2v3H0zM3 9h2v5H3zM6 7h2v7H6zM9 4h2v10H9zM12 1h3v13h-3z" fill="#fff"/></svg>
    <svg width="16" height="14"><path d="M0 4h3l4-4v14l-4-4H0z" fill="#fff"/><path d="M9 4q2 3 0 6M11 2q4 5 0 10M14 1q3 6 0 12" fill="none" stroke="#fff"/></svg>
    <div class="clock"><span>9:19 PM</span><span>9/28/2014</span></div>
  </div>
</footer>

<section class="show-me">
  <header><svg class="grip" width="16" height="16" fill="#a5b0bb"><path d="M1 1h1v1H1zM1 5h1v1H1zM1 9h1v1H1zM1 13h1v1H1zM5 5h1v1H5zM5 9h1v1H5zM5 13h1v1H5zM9 9h1v1H9zM9 13h1v1H9zM13 13h1v1h-1z"/></svg><svg width="18" height="14"><path d="M1 4h3v8H1z" fill="#c08a10"/><path d="M5 1h3v11H5z" fill="#a0280c"/><path d="M9 3h3v9H9z" fill="#18a818"/><path d="M13 6h3v6h-3z" fill="#2a3cf0"/><path d="M0 13h18" stroke="#555"/></svg>Show Me</header>
  <div class="thumbs">
    <svg viewBox="0 0 126 84"><path d="M0 0h126v26H0zM0 54h126v30H0z" fill="#f2f2f2"/><path d="M6 15h9M6 43h15M6 69h9" stroke="#b0b0b0" stroke-width="6"/><g class="digits"><text x="32" y="24">123</text><text x="80" y="24">123</text><text x="32" y="50">123</text><text x="80" y="50">123</text><text x="32" y="75">123</text><text x="80" y="75">123</text></g></svg>
    <svg viewBox="0 0 126 84"><path d="M6 19h9M6 43h15M6 63h9" stroke="#ddd" stroke-width="6"/><path d="M33 9h15v15H33zM78 10h15v13H78zM36 32h12v12H36zM98 29h16v16H98z" fill="#b5bfb5"/><path d="M54 9h15v15H54z" fill="#c4b4b8"/><path d="M102 12h10v10h-10zM58 33h10v10H58zM30 52h21v21H30zM76 52h24v24H76z" fill="#b9c3ba"/><path d="M77 31h15v14H77zM54 55h15v15H54zM102 55h14v14h-14z" fill="#a9b3ab"/></svg>
    <svg viewBox="0 0 126 84"><path d="M26 3h100v24H26z" fill="#e9ece8"/><path d="M26 29h50v24H26z" fill="#f7ecec"/><path d="M78 29h48v24H78z" fill="#ebeeea"/><path d="M26 56h100v26H26z" fill="#f1f1ee"/><path d="M25 2v80M77 2v80M3 27h120M3 54h120" stroke="#d4d4d4" stroke-width="3"/><path d="M6 16h8M6 42h13M6 69h8" stroke="#ccc" stroke-width="5"/><g class="digits small"><text x="42" y="21">122</text><text x="82" y="21">1222</text><text x="34" y="48">1347</text><text x="82" y="48">1150</text><text x="34" y="75">2552</text><text x="88" y="75">021</text></g></svg>
    <svg viewBox="0 0 126 84"><g fill="#d9d9d9"><path d="M6 12l22-5 30 4-8 14-10 4-6 14-8-4-10-14-12-4zM34 42l12 6-4 18-8 4-4-14zM54 32l14-2 14 6-6 20-8 8-6-16-10-6zM60 10l16 4 24-6 22 6-6 14-14 10-10 10-8-12-10 2-10-8-6-8zM100 56l14 0 2 8-12 4z"/></g><path d="M14 29h0M30 52h0M85 32h0M97 36h0M104 61h0M32 12h0" stroke="#9dabb8" stroke-width="9" stroke-linecap="round"/></svg>
    <svg viewBox="0 0 126 84"><g fill="#b9c5ba"><path d="M6 12l22-5 30 4-8 14-10 4-6 14-8-4-10-14-12-4zM34 42l12 6-4 18-8 4-4-14zM54 32l14-2 14 6-6 20-8 8-6-16-10-6z"/><path d="M60 18l16-8 24-2 22 6-6 14-14 10-10 10-8-12-10 2-10-8zM100 56l14 0 2 8-12 4z" fill="#a2b2a4"/></g></svg>
    <svg viewBox="0 0 126 84"><circle cx="63" cy="42" r="30" fill="#c6cfc8"/><path d="M63 42V12A30 30 0 0191 32z" fill="#c3cad5"/><path d="M63 42l28-10q6 18-10 34z" fill="#e0d2c9"/><path d="M63 42V12a30 30 0 00-30 32z" fill="#dccaca"/></svg>
    <svg viewBox="0 0 126 84"><path d="M3 16h33M3 34h108M3 52h18M3 70h78" stroke="#abb5bd" stroke-width="9"/></svg>
    <svg viewBox="0 0 126 84"><path d="M22 12v24M49 33v18M76 15v51M103 50v9" stroke="#abb5bd" stroke-width="15"/><path d="M22 36v45M49 50v31M76 65v16M103 59v22" stroke="#d8cac0" stroke-width="15"/></svg>
    <svg viewBox="0 0 126 84"><path d="M17 21v60M56 60v21M96 51v30" stroke="#abb5bd" stroke-width="12"/><path d="M30 51v30M68 9v72M108 36v45" stroke="#d8cac0" stroke-width="12"/><path d="M42 0v84M81 0v84" stroke="#e3e3e3" stroke-width="3"/></svg>
    <svg viewBox="0 0 126 84"><path d="M12 12h51v29H12zM12 45h51v26H12z" fill="#c9d0c8"/><path d="M66 12h24v23H66zM66 60h15v12H66zM84 60h15v12H84zM84 38h15v19H84z" fill="#a9b3ab"/><path d="M92 12h22v23H92z" fill="#cfd6cf"/><path d="M66 38h15v19H66z" fill="#ddd0c7"/><path d="M102 38h12v18h-12zM102 60h12v12h-12z" fill="#b5bdb6"/></svg>
    <svg viewBox="0 0 126 84" class="rings"><g stroke="#b9c3cf"><circle cx="26" cy="18" r="11"/><circle cx="98" cy="28" r="11"/><circle cx="98" cy="38" r="11"/></g><g stroke="#bccabc"><circle cx="26" cy="34" r="11"/><circle cx="62" cy="55" r="11"/><circle cx="62" cy="78" r="11"/></g><g stroke="#dfcdc2"><circle cx="26" cy="53" r="11"/><circle cx="62" cy="26" r="11"/><circle cx="98" cy="70" r="11"/></g></svg>
    <svg viewBox="0 0 126 84" class="rings"><g stroke="#b9c3cf"><circle cx="18" cy="28" r="10"/><circle cx="18" cy="35" r="10"/><circle cx="18" cy="62" r="10"/><circle cx="79" cy="18" r="10"/><circle cx="79" cy="52" r="10"/><circle cx="79" cy="66" r="10"/></g><g stroke="#dfcdc2"><circle cx="45" cy="15" r="10"/><circle cx="45" cy="37" r="10"/><circle cx="45" cy="47" r="10"/><circle cx="106" cy="28" r="10"/><circle cx="106" cy="40" r="10"/><circle cx="106" cy="63" r="10"/></g><path d="M62 0v84" stroke="#e3e3e3"/></svg>
    <svg viewBox="0 0 126 84" class="lines"><path d="M3 21l14-12 38 36 18-21 20 18 30-24" stroke="#a6b1bd"/><path d="M3 45l18 18 30-45 42 50 30-28" stroke="#ccb9ab"/><path d="M3 66l16 14 44-18 36 15 24-9" stroke="#b0c2b0"/></svg>
    <svg viewBox="0 0 126 84" class="lines"><path d="M6 27l15-12 20 20 14-14M72 34l18-16 12 8 18-14" stroke="#a6b1bd"/><path d="M6 21l16 16 16-12 18 14M72 52l16-10 10 4 22-28" stroke="#ccb9ab"/><path d="M6 57l15-9 20 15 6-6 9 9M72 66l18-14 10 8 20-30" stroke="#b0c2b0"/><path d="M63 0v84" stroke="#e3e3e3"/></svg>
    <svg viewBox="0 0 126 84" class="lines"><path d="M18 28l16-14 20 18 20-12 16 14 18-16" stroke="#b5bfc9"/><path d="M18 48l16 2 14 14 10-6 18 6 10-12 22 12" stroke="#dccdc2"/><path d="M3 12h6M3 24h6M3 36h6M3 48h6M3 60h6M3 72h6" stroke="#dccdc2"/><path d="M114 12h9M114 27h9M114 42h9M114 57h9M114 72h9" stroke="#b5b5b5"/></svg>
    <svg viewBox="0 0 126 84"><path d="M3 45L40 12l44 27 39-12v54H3z" fill="#bcc4cb"/><path d="M3 54L40 28l44 34 39-22v41H3z" fill="#dbcdc3"/><path d="M3 75l37-17 44 20 39-20v23H3z" fill="#c7d1c7"/></svg>
    <svg viewBox="0 0 126 84"><path d="M6 27l15-15 20 38 15-28v54H6zM69 15l32 26 22-12v48H69z" fill="#b5bfc8"/><path d="M6 44l15-16 18 28 17-20v40H6zM69 20l32 26 22-4v34H69z" fill="#dbcdc3"/><path d="M6 66l15-12 16 18 19-14v18H6zM69 27l32 23 22-6v32H69z" fill="#c7d1c7"/><path d="M64 0v84" stroke="#ddd" stroke-width="3"/></svg>
    <svg viewBox="0 0 126 84"><path d="M27 42v39M45 30v51M63 54v27M81 9v72M99 42v39" stroke="#abb5bd" stroke-width="12"/><path d="M24 30l20-20 20 27 18-20 20 20" fill="none" stroke="#dccdc2" stroke-width="3"/><path d="M3 14h9M3 25h9M3 36h9M3 47h9M3 58h9M3 69h9" stroke="#dccdc2" stroke-width="3"/><path d="M114 14h9M114 34h9M114 54h9M114 72h9" stroke="#bbb" stroke-width="3"/></svg>
    <svg viewBox="0 0 126 84" class="rings"><g stroke="#b5c0ca"><circle cx="13" cy="70" r="6"/><circle cx="31" cy="49" r="6"/><circle cx="49" cy="40" r="6"/><circle cx="73" cy="31" r="6"/><circle cx="91" cy="40" r="6"/><circle cx="94" cy="10" r="6"/></g><path d="M24 67h14M31 60v14M39 58h14M46 51v14M54 16h14M61 9v14M63 52h14M70 45v14M99 28h14M106 21v14" stroke="#d8c8bc"/></svg>
    <svg viewBox="0 0 126 84"><path d="M13 76v5M25 63v18M37 33v48M49 15v66M61 9v72M73 15v66M85 33v48M97 63v18M109 76v5" stroke="#b8b8b8" stroke-width="9"/></svg>
    <svg viewBox="0 0 126 84"><path d="M22 24v45M49 21v49M76 18v52M103 12v56" stroke="#aaa" stroke-width="3"/><path d="M22 40v18M49 40v22M76 28v24M103 21v30" stroke="#cfcfcf" stroke-width="15"/><path d="M22 48v9M49 50v12M76 45v9M103 38v13" stroke="#b0b0b0" stroke-width="15"/></svg>
    <svg viewBox="0 0 126 84"><path d="M3 9h18v15H3zM48 33h39v15H48zM30 33h9v15h-9zM62 57h13v15H62z" fill="#abb5bd"/><path d="M48 9h6v15h-6zM57 9h6v15h-6zM75 9h3v15h-3zM87 9h15v15H87zM9 57h18v15H9zM36 57h6v15h-6zM93 57h9v15h-9zM3 33h9v15H3z" fill="#cfc0b8"/><path d="M96 33h18v15H96zM15 33h6v15h-6zM30 57h3v15h-3z" fill="#b0bfb1"/></svg>
    <svg viewBox="0 0 126 84"><path d="M3 16h120M3 40h120M3 64h120" stroke="#eceff1" stroke-width="15"/><path d="M3 16h60M3 40h90M3 64h57" stroke="#a9b4bd" stroke-width="9"/><path d="M70 9v15M88 33v15M106 57v15" stroke="#777" stroke-width="3"/></svg>
    <svg viewBox="0 0 126 84"><circle cx="33" cy="39" r="24" fill="#c8ccd5"/><circle cx="76" cy="23" r="14" fill="#ddd0c9"/><circle cx="73" cy="51" r="12" fill="#cdc0b8"/><circle cx="103" cy="40" r="14" fill="#c7d1c7"/><circle cx="55" cy="67" r="8" fill="#c7d1c7"/></svg>
  </div>
  <h2>Select view</h2>
</section>
</body>
</html>
```

FILE: styles.css
```css
* { box-sizing: border-box; }
html, body { margin: 0; height: 100%; }
body {
  display: flex;
  flex-direction: column;
  min-height: 100vh;
  overflow: hidden;
  background: #efefef;
  color: #111;
  font: 12px/16px "Open Sans", "Noto Sans", sans-serif;
}
h1, h2, h3, h4, ul { margin: 0; padding: 0; font: inherit; list-style: none; }
button, input, select { font: inherit; color: inherit; margin: 0; padding: 0; border: 0; background: none; }
svg { display: block; flex: none; }
.defs { position: absolute; width: 0; height: 0; }

/* Title bar */
.titlebar { display: flex; align-items: center; height: 23px; flex: none; background: #d3606b; border-bottom: 1px solid #b04a55; padding: 0 3px 0 2px; }
.app-icon { width: 16px; height: 17px; }
.titlebar h1 { flex: 1; text-align: center; font-size: 14px; line-height: 20px; padding: 2px 0 0 80px; color: #2b1a1c; }
.window-controls { display: flex; align-self: flex-start; }
.window-controls button { display: grid; place-items: center; width: 26px; height: 19px; }
.window-controls .close { width: 45px; background: #c75050; }

/* Menu bar */
.menubar { display: flex; align-items: center; gap: 14px; height: 20px; flex: none; padding: 0 15px 0 8px; background: #f5f6f7; }
.menubar a { padding-top: 2px; color: #000; text-decoration: none; }
.menubar u { text-underline-offset: 2px; }
.view-tabs { display: flex; gap: 3px; margin-left: auto; align-self: flex-end; }
.view-tabs button { display: grid; place-items: center; width: 29px; height: 16px; background: #efede6; border: 1px solid #6e6a55; border-bottom: 0; border-radius: 4px 4px 0 0; }
.view-tabs button:nth-child(n+3) { background: #fff; }
.view-tabs .on { background: #dfe6f4; }

/* Toolbar */
.toolbar { display: flex; align-items: center; height: 31px; flex: none; background: #efefef; }
.tool { display: grid; place-items: center; width: 26px; height: 26px; }
.tool-menu { display: flex; align-items: center; justify-content: space-between; width: 38px; height: 26px; padding: 0 4px 0 3px; }
.w28 { width: 28px; }
.w30 { width: 30px; }
.w42 { width: 42px; padding: 0 6px; }
.caret { width: 8px; height: 5px; color: #000; }
.off .caret { color: #aaa; }
.abc { color: #bdbdbd; font-weight: 600; }
.sep { width: 6px; height: 18px; background: linear-gradient(#cfcfcf, #cfcfcf) center / 1px 100% no-repeat; }
.fit { width: 86px; height: 21px; background: #fff; border: 1px solid #dcdcdc; opacity: .6; }

/* Shell */
.main { display: flex; flex: 1; min-height: 0; border-top: 2px solid #848484; }
.sidebar { display: flex; flex-direction: column; width: 202px; flex: none; border-right: 2px solid #7c7c7c; background: #efefef; }
.panel-head { display: flex; justify-content: space-between; align-items: center; height: 21px; flex: none; padding: 0 10px 0 3px; font-weight: 700; background: #dadada; border: solid #a0a0a0; border-width: 1px 0; }
.panel-head.first { height: 19px; border-top: 0; }
.sheets { flex: 1; padding: 0 11px; background: #f8f8f8; }
.sheets li { display: flex; align-items: center; gap: 3px; height: 17px; }
.objects { padding: 0 6px; background: #f8f8f8; }
.objects ul { display: grid; grid-template-columns: 94px 1fr; padding: 7px 0 7px 8px; border: solid #a0a0a0; border-width: 1px 0; }
.objects li { display: flex; align-items: center; gap: 6px; height: 18px; }
.new-objects { padding: 5px 16px 8px; background: #f8f8f8; }
.new-objects span { display: block; padding-bottom: 2px; }
.new-objects div { display: flex; gap: 3px; }
.new-objects button { flex: 1; height: 19px; line-height: 16px; border: 1px solid #a0a0a0; background: #dadada; }
.new-objects .on { background: #cce4ff; border-color: #3399ff; }
.layout-tree { flex: 0 1 220px; padding: 2px 6px; }
.layout-tree div { line-height: 18px; }
.node { display: flex; align-items: center; padding-left: 3px; gap: 7px; }
.node svg + svg { margin-left: 2px; }

/* Size form */
.size { height: 97px; padding: 6px 9px 0; flex: none; }
.row { display: flex; align-items: center; }
.size-row { justify-content: space-between; height: 21px; }
.size select { width: 151px; height: 21px; padding-left: 0; border: 1px solid #a8adb5; background: #fff; }
.dims { justify-content: space-between; height: 23px; padding-top: 3px; }
.dims label:first-child { width: 54px; }
.dims label { display: flex; align-items: center; }
input[type="checkbox"] { width: 13px; height: 13px; margin-right: 5px; appearance: none; border: 1px solid #555; background: #fff; }
input[type="checkbox"]:checked::before { content: ""; display: block; width: 8px; height: 4px; margin: 2px 1px; border: solid #111; border-width: 0 0 2px 2px; transform: rotate(-48deg); }
.spin { display: flex; align-items: center; width: 50px; height: 20px; padding: 0 1px 0 3px; border: 1px solid #a8adb5; background: #fff; }
.spin.cut { border-bottom: 0; }
.spin input { flex: 1; width: 20px; min-width: 0; height: 18px; }
.size > label { height: 18px; }

/* Workspace */
.workspace { display: flex; flex-direction: column; flex: 1; min-width: 0; border-bottom: 4px solid #efefef; }
.canvas { flex: 1; min-height: 0; background: #e6e6e6; }
.page { display: flex; flex-direction: column; width: 100%; max-width: 650px; height: 100%; max-height: 860px; padding: 0 8px 8px; background: #fff; color: #555; }
.page-title { padding: 28px 2px 26px; font: bold 32px/38px "Liberation Sans", Arial, sans-serif; }
.page-body { display: flex; flex: 1; min-height: 0; }
.sheet { display: flex; flex-direction: column; flex: 1; min-width: 0; }
.sheet h3 { height: 28px; font-size: 15px; line-height: 22px; font-weight: 700; }
.map { position: relative; flex: 1; min-height: 0; border: 1px solid #d4d4d4; }
.map > svg { width: 100%; height: 100%; }
.channels path { fill: none; stroke: #353535; stroke-width: 5; }
.borders path { fill: none; stroke: #484848; stroke-width: 4; }
.dots circle { stroke: #000; stroke-width: 3; }
.dot, .core { fill: none; stroke-linecap: round; }
.dot { stroke: #000; stroke-width: 18; }
.core { stroke: #c4dabb; stroke-width: 7; }
.credit { position: absolute; left: 0; bottom: 0; padding: 0 2px; background: #2b2b2b; color: #858585; font: 11px/16px "Liberation Sans", Arial, sans-serif; }
.legends { width: 156px; padding: 1px 0 0 8px; font: 11px/16px "Liberation Sans", Arial, sans-serif; }
.legends h4 { font-size: 12px; font-weight: 700; line-height: 16px; }
.sizes { padding: 0 0 7px 2px; }
.sizes li { display: flex; width: 55px; height: 20px; align-items: center; justify-content: space-between; }
.sizes circle { fill: #d6d6d6; stroke: #b0b0b0; stroke-width: 2; }
.sizes .speck { fill: #b0b0b0; stroke: none; }
.ramp { display: flex; align-items: center; gap: 3px; padding: 3px 4px; }
.ramp i { width: 109px; height: 16px; border: 1px solid #aaa39c; background: linear-gradient(90deg, #b7d1ae, #7fb56f 24%, #33934a 50%, #237a3a 75%, #0a622a); }

/* Sheet tabs */
.sheet-tabs { display: flex; gap: 3px; height: 27px; flex: none; padding-left: 2px; border-top: 1px solid #a0a0a0; background: #efefef; }
.sheet-tabs button { display: flex; align-items: center; justify-content: center; gap: 6px; width: 71px; border: 1px solid #a5a5a5; border-top: 0; border-radius: 0 0 7px 7px; background: #ececec; }
.sheet-tabs .on { width: 114px; margin-top: -1px; background: #fff; font-weight: 700; }
.sheet-tabs .add { width: 32px; background: #e4e4e4; }
.sheet-tabs .on + .add { margin-left: 3px; }

/* Status bar */
.statusbar { display: flex; justify-content: flex-end; height: 19px; flex: none; border-top: 1px solid #848484; background: #efefef; }
.statusbar > * { display: grid; place-items: center; border-left: 1px solid #cfcfcf; }
.c127 { width: 127px; }
.c27 { width: 27px; }
.c47 { width: 47px; }
.pager { width: 71px; }
.more { width: 23px; }

/* Taskbar */
.taskbar { position: relative; z-index: 0; display: flex; align-items: center; height: 40px; flex: none; color: #fff; overflow: hidden; }
.wallpaper { position: absolute; inset: 0; width: 100%; height: 100%; z-index: -1; }
.start { width: 48px; height: 40px; display: grid; place-items: center end; padding-right: 10px; margin-right: 4px; }
.task { display: flex; align-items: center; gap: 7px; width: 158px; height: 38px; margin-right: 4px; padding: 0 8px; border: 1px solid rgba(255,255,255,.35); background: rgba(255,255,255,.14); white-space: nowrap; }
.task.joined { width: 159px; margin-right: 0; }
.task.on { background: rgba(255,255,255,.35); border-color: rgba(255,255,255,.8); }
.pins { display: flex; padding: 0 2px; }
.pin { display: grid; place-items: center; width: 62px; height: 40px; }
.prompt { fill: #fff; font: 8px "Liberation Mono", monospace; }
.tray { display: flex; align-items: center; gap: 8px; margin-left: auto; padding-right: 14px; }
.battery { position: relative; width: 55px; height: 25px; margin-right: 4px; border: 2px solid #fff; background: linear-gradient(90deg, transparent 42px, #000 42px), linear-gradient(#1fa64a 48%, #04742b 52%); font: 12px/21px "DejaVu Sans", sans-serif; text-align: center; }
.battery::after { content: ""; position: absolute; right: -5px; top: 5px; width: 4px; height: 11px; background: #000; border: solid #fff; border-width: 1px 1px 1px 0; }
.clock { display: flex; flex-direction: column; align-items: center; margin-left: 8px; padding-top: 2px; }
.clock span { line-height: 17px; }

/* Show Me palette */
.show-me { position: absolute; right: 16px; top: 50px; width: 168px; height: 412px; border: 1px solid #999; border-radius: 5px 5px 0 0; background: #fff; box-shadow: 3px 3px 4px rgba(0,0,0,.3); }
.show-me header { position: relative; display: flex; align-items: center; justify-content: center; gap: 7px; height: 23px; padding-top: 2px; border-bottom: 1px solid #b5bec7; border-radius: 4px 4px 0 0; background: #dfebf6; color: #000; }
.show-me .grip { position: absolute; left: 3px; top: 4px; }
.thumbs { display: grid; grid-template-columns: repeat(3, 42px); gap: 6px 11px; padding: 6px 9px; }
.thumbs svg { width: 42px; height: 28px; border: 1px solid #e2e2e2; }
.digits { fill: #999; font: 20px "DejaVu Sans Mono", monospace; }
.digits.small { font-size: 15px; }
.rings { fill: none; stroke-width: 3; }
.lines { fill: none; stroke-width: 3; }
.show-me h2 { padding: 2px 6px; font-weight: 700; color: #000; }
```
